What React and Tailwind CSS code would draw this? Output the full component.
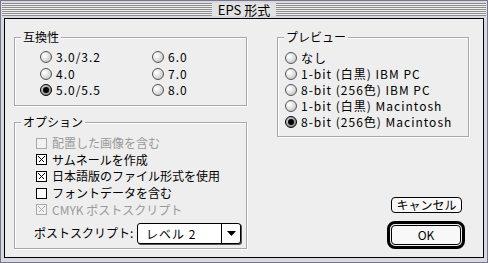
import React from "react";

const font = { fontFamily: '"Noto Sans CJK JP", "Liberation Sans", sans-serif' };

const Radio = ({ checked, label }) => (
  <div className="flex items-center h-[16px] gap-[4px]">
    <span
      className={`relative w-[12px] h-[12px] rounded-full border shrink-0 flex items-center justify-center ${
        checked
          ? "border-black bg-[radial-gradient(circle_at_35%_35%,#dcdcdc,#6a6a6a)]"
          : "border-[#555] bg-[radial-gradient(circle_at_35%_35%,#ffffff_10%,#b4b4b4)]"
      }`}
    >
      {checked && <span className="w-[6px] h-[6px] rounded-full bg-black" />}
    </span>
    <span className="text-[12px] leading-[14px] text-black whitespace-nowrap tracking-[1px]">
      {label}
    </span>
  </div>
);

const Check = ({ checked, disabled, label }) => (
  <div className="flex items-center h-[16.6px] gap-[5px]">
    <span
      className={`w-[11px] h-[11px] border shrink-0 flex items-center justify-center ${
        disabled ? "border-[#a8a8a8] bg-[#f2f2f2]" : "border-black bg-white"
      }`}
    >
      {checked && (
        <svg width="9" height="9" viewBox="0 0 9 9">
          <path
            d="M1.5 1.5 L7.5 7.5 M7.5 1.5 L1.5 7.5"
            stroke={disabled ? "#a8a8a8" : "#000"}
            strokeWidth="1"
            shapeRendering="crispEdges"
          />
        </svg>
      )}
    </span>
    <span
      className={`text-[12px] leading-[14px] whitespace-nowrap ${
        disabled ? "text-[#9a9a9a]" : "text-black"
      }`}
    >
      {label}
    </span>
  </div>
);

const Group = ({ title, className, children }) => (
  <div
    className={`relative border border-[#a8a8a8] shadow-[inset_1px_1px_0_#ffffff,1px_1px_0_#ffffff] ${className}`}
  >
    <span className="absolute top-[-8px] left-[6px] px-[2px] bg-[#eeeeee] text-[12px] leading-[14px] text-black">
      {title}
    </span>
    {children}
  </div>
);

export default function App() {
  return (
    <div
      style={font}
      className="w-[488px] h-[263px] bg-[#d8d8e0] border border-[#77778a] flex flex-col"
    >
      {/* title bar */}
      <div className="h-[17px] px-[1px] pt-[2px] pb-[2px] flex">
        <div className="flex-1 relative bg-[repeating-linear-gradient(to_bottom,#8c8c8c_0px,#8c8c8c_1px,#f0f0f0_1px,#f0f0f0_2px)] flex items-center justify-center">
          <span className="bg-[#e2e2e2] px-[6px] text-[13px] leading-[13px] h-[13px] text-black whitespace-nowrap">
            EPS 形式
          </span>
        </div>
      </div>

      {/* content */}
      <div className="flex-1 mx-[3px] mb-[4px] border border-black bg-[#eeeeee] flex pl-[9px] pt-[18px]">
        <div className="w-[233px] flex flex-col">
          <Group title="互換性" className="h-[69px] pl-[25px] pt-[11px]">
            <div className="grid grid-cols-[112px_auto] grid-rows-[16.5px_16.5px_16.5px] grid-flow-col">
              <Radio label="3.0/3.2" />
              <Radio label="4.0" />
              <Radio checked label="5.0/5.5" />
              <Radio label="6.0" />
              <Radio label="7.0" />
              <Radio label="8.0" />
            </div>
          </Group>

          <Group title="オプション" className="mt-[16px] h-[127px] pl-[21px] pt-[12px]">
            <Check disabled label="配置した画像を含む" />
            <Check checked label="サムネールを作成" />
            <Check checked label="日本語版のファイル形式を使用" />
            <Check label="フォントデータを含む" />
            <Check checked disabled label="CMYK ポストスクリプト" />
            <div className="flex items-center mt-[5px] -ml-[2px]">
              <span className="text-[12px] leading-[14px] text-black whitespace-nowrap w-[103px]">
                ポストスクリプト:
              </span>
              <div className="w-[104px] h-[21px] border border-black rounded-[3px] bg-white shadow-[1px_1px_0_#555] flex">
                <span className="flex-1 pl-[8px] text-[12px] leading-[19px] text-black whitespace-nowrap tracking-[1px]">
                  レベル 2
                </span>
                <span className="w-[19px] border-l border-black flex items-center justify-center">
                  <svg width="9" height="5" viewBox="0 0 9 5">
                    <path d="M0 0 H9 L4.5 5 Z" fill="#000" />
                  </svg>
                </span>
              </div>
            </div>
          </Group>
        </div>

        <div className="w-[192px] ml-[30px] flex flex-col">
          <Group title="プレビュー" className="h-[100px] pl-[7px] pt-[12px]">
            <Radio label="なし" />
            <Radio label="1-bit (白黒) IBM PC" />
            <Radio label="8-bit (256色) IBM PC" />
            <Radio label="1-bit (白黒) Macintosh" />
            <Radio checked label="8-bit (256色) Macintosh" />
          </Group>

          <button className="self-end mr-[7px] mt-[60px] w-[71px] h-[16px] border border-black rounded-[4px] bg-[#f8f8f8] text-[12px] leading-[14px] text-black whitespace-nowrap flex items-center justify-center">
            キャンセル
          </button>

          <div className="self-end mr-[4px] mt-[8px] w-[78px] h-[28px] border-[3px] border-black rounded-[8px] p-[1px]">
            <button className="w-full h-full border border-black rounded-[4px] bg-[#f8f8f8] text-[12px] leading-[14px] text-black flex items-center justify-center">
              OK
            </button>
          </div>
        </div>
      </div>
    </div>
  );
}
